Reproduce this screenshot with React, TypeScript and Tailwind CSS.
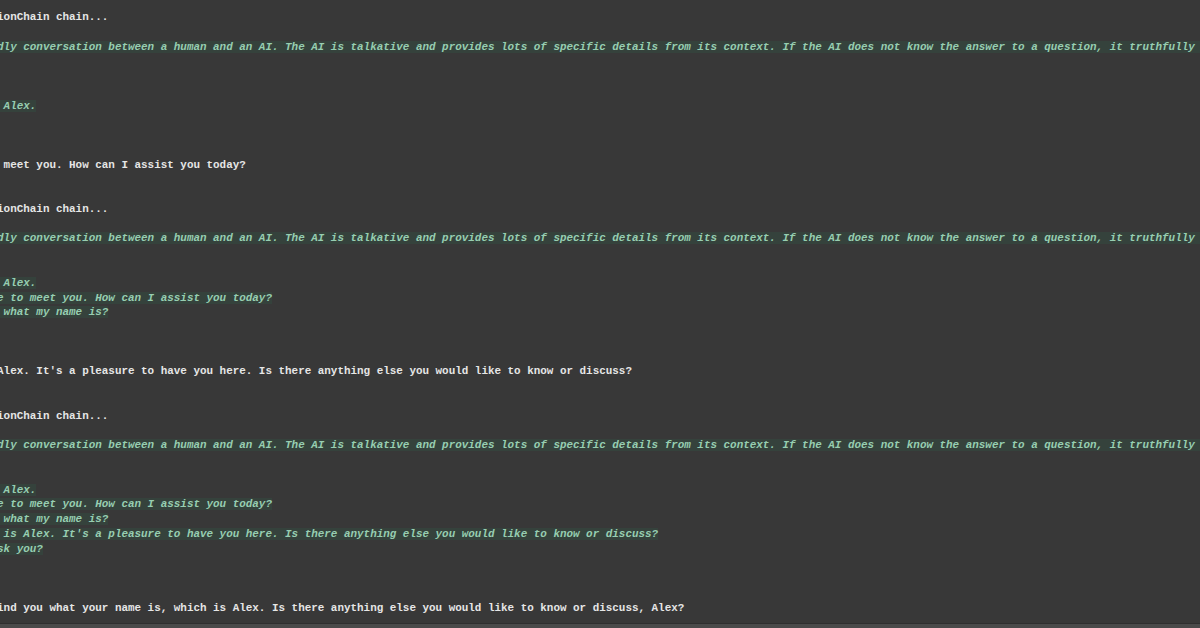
type Line = { kind: "w" | "g" | "b"; text: string };

const ENTER = "> Entering new ConversationChain chain...";
const PROMPT_AFTER = "Prompt after formatting:";
const SYSTEM =
  "The following is a friendly conversation between a human and an AI. The AI is talkative and provides lots of specific details from its context. If the AI does not know the answer to a question, it truthfully says it does not know.";
const FINISHED = "> Finished chain.";
const GREETING = "Hello Alex! It's nice to meet you. How can I assist you today?";
const NAME_REPLY =
  "Of course! Your name is Alex. It's a pleasure to have you here. Is there anything else you would like to know or discuss?";

const lines: Line[] = [
  { kind: "w", text: ENTER },
  { kind: "w", text: PROMPT_AFTER },
  { kind: "g", text: SYSTEM },
  { kind: "b", text: "" },
  { kind: "g", text: "Current conversation:" },
  { kind: "b", text: "" },
  { kind: "g", text: "Human: Hello, my name is Alex." },
  { kind: "g", text: "AI:" },
  { kind: "b", text: "" },
  { kind: "w", text: FINISHED },
  { kind: "w", text: GREETING },
  { kind: "b", text: "" },
  { kind: "b", text: "" },
  { kind: "w", text: ENTER },
  { kind: "w", text: PROMPT_AFTER },
  { kind: "g", text: SYSTEM },
  { kind: "b", text: "" },
  { kind: "g", text: "Current conversation:" },
  { kind: "g", text: "Human: Hello, my name is Alex." },
  { kind: "g", text: "AI: " + GREETING },
  { kind: "g", text: "Human: Could you tell me what my name is?" },
  { kind: "g", text: "AI:" },
  { kind: "b", text: "" },
  { kind: "w", text: FINISHED },
  { kind: "w", text: NAME_REPLY },
  { kind: "b", text: "" },
  { kind: "b", text: "" },
  { kind: "w", text: ENTER },
  { kind: "w", text: PROMPT_AFTER },
  { kind: "g", text: SYSTEM },
  { kind: "b", text: "" },
  { kind: "g", text: "Current conversation:" },
  { kind: "g", text: "Human: Hello, my name is Alex." },
  { kind: "g", text: "AI: " + GREETING },
  { kind: "g", text: "Human: Could you tell me what my name is?" },
  { kind: "g", text: "AI: " + NAME_REPLY },
  { kind: "g", text: "Human: What did I just ask you?" },
  { kind: "g", text: "AI:" },
  { kind: "b", text: "" },
  { kind: "w", text: FINISHED },
  {
    kind: "w",
    text: "Sure, I'd be glad to remind you what your name is, which is Alex. Is there anything else you would like to know or discuss, Alex?",
  },
];

const OutputLine = ({ line }: { line: Line }) => {
  if (line.kind === "b") return <div className="h-[14.775px]" />;

  return (
    <div className="h-[14.775px] leading-[14.775px] whitespace-pre">
      {line.kind === "g" ? (
        <span className="italic text-[#97ceb1] bg-[#35423c]">{line.text}</span>
      ) : (
        <span className="text-[#e6e6e6]">{line.text}</span>
      )}
    </div>
  );
};

const App = () => {
  return (
    <div className="w-[1200px] h-[628px] bg-[#383838] flex flex-col overflow-hidden">
      {/* output cell, scrolled horizontally so the left part is cut off */}
      <div className="flex-1 overflow-hidden pt-[10px]">
        <div className="-ml-[160px] font-['Liberation_Mono',monospace] font-bold text-[10.92px]">
          {lines.map((line, i) => (
            <OutputLine key={i} line={line} />
          ))}
        </div>
      </div>
      <div className="h-[5px] bg-[#4a4a4a] border-t border-[#2f2f2f]" />
    </div>
  );
};

export default App;
